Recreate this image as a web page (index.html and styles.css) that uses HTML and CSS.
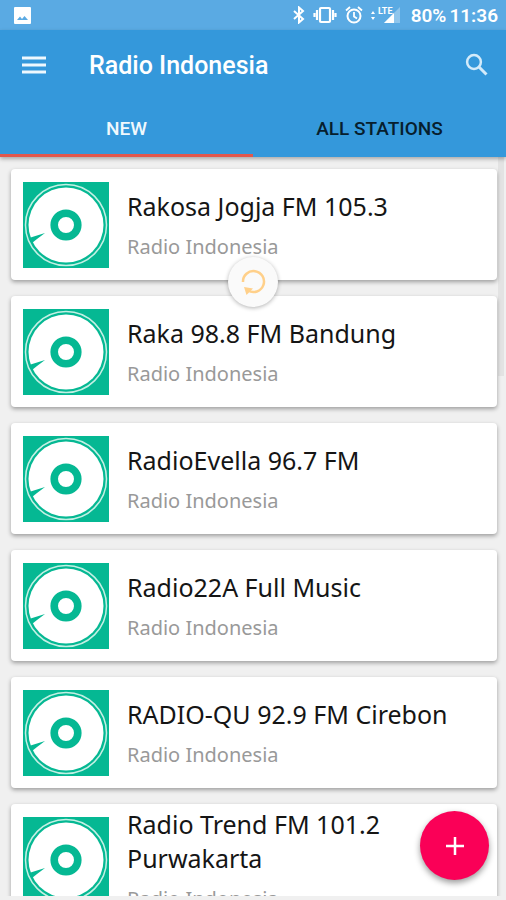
FILE: index.html
```html
<!DOCTYPE html>
<html lang="en">
<head>
    <meta charset="UTF-8">
    <meta name="viewport" content="width=device-width, initial-scale=1.0">
    <title>Radio Indonesia</title>
    <link rel="stylesheet" href="styles.css">
</head>
<body>
    <!-- Shared disc artwork for every station -->
    <svg class="sprite" aria-hidden="true">
        <symbol id="disc" viewBox="0 0 86 86">
            <rect width="86" height="86" fill="#05b893"/>
            <circle cx="43" cy="43" r="40.5" fill="none" stroke="#c4f0e4" stroke-width="1.5"/>
            <circle cx="43" cy="43" r="37.5" fill="#fff"/>
            <circle cx="43" cy="43" r="11.8" fill="#fff" stroke="#05b893" stroke-width="7.6"/>
            <path d="M22 51 L6 56 L9 61 L14 57 Z" fill="#05b893"/>
        </symbol>
    </svg>

    <div class="app">
        <div class="status-bar">
            <svg viewBox="0 0 17 17" width="17" height="17">
                <rect width="17" height="17" rx="1" fill="#fff"/>
                <path d="M3 13 L6 9.5 L8 12 L10.5 9 L14 13 Z" fill="#5aaae3"/>
            </svg>
            <div class="status-icons">
                <svg viewBox="0 0 12 18" width="12" height="18">
                    <path d="M1 5 L10 13 L6 16.5 V1.500 L10 5 L1 13" fill="none" stroke="#fff" stroke-width="2"/>
                </svg>
                <svg viewBox="0 0 24 18" width="24" height="18">
                    <rect x="7" y="2" width="10" height="14" rx="1" fill="none" stroke="#fff" stroke-width="2.2"/>
                    <path d="M4 4 V14 M20 4 V14 M1.5 7 V11 M22.5 7 V11" stroke="#fff" stroke-width="2.2"/>
                </svg>
                <svg viewBox="0 0 18 18" width="18" height="18">
                    <circle cx="9" cy="10" r="6.5" fill="none" stroke="#fff" stroke-width="2"/>
                    <path d="M9 6 V10.5 L12 12.5 M1 4.5 L5 1 M17 4.5 L13 1" fill="none" stroke="#fff" stroke-width="1.8"/>
                </svg>
                <svg viewBox="0 0 30 18" width="30" height="18">
                    <path d="M0 8 L2 5 L4 8 Z M0 11 L2 14 L4 11 Z" fill="#fff"/>
                    <path d="M29 1 V17 H13 Z" fill="#8fc5ec"/>
                    <path d="M23 7 V17 H13 Z" fill="#fff"/>
                    <text x="7" y="8" class="lte">LTE</text>
                </svg>
            </div>
            <span class="battery">80%</span>
            <span class="clock">11:36</span>
        </div>

        <header class="header">
            <div class="toolbar">
                <button type="button" class="icon-button" aria-label="Menu">
                    <svg viewBox="0 0 24 18" width="24" height="18">
                        <path d="M0 2 H24 M0 9 H24 M0 16 H24" stroke="#eef8fe" stroke-width="3"/>
                    </svg>
                </button>
                <h1>Radio Indonesia</h1>
                <button type="button" class="icon-button" aria-label="Search">
                    <svg viewBox="0 0 24 24" width="24" height="24">
                        <circle cx="9" cy="9" r="6.9" fill="none" stroke="#d3ebfa" stroke-width="2.5"/>
                        <path d="M14 14 L21.5 21.5" stroke="#d3ebfa" stroke-width="3"/>
                    </svg>
                </button>
            </div>
            <nav class="tabs">
                <a href="#new" class="tab active">NEW</a>
                <a href="#all" class="tab">ALL STATIONS</a>
            </nav>
        </header>

        <main class="stations">
            <article class="card">
                <svg class="cover"><use href="#disc"/></svg>
                <div class="info">
                    <h2>Rakosa Jogja FM 105.3</h2>
                    <p>Radio Indonesia</p>
                </div>
            </article>
            <article class="card">
                <svg class="cover"><use href="#disc"/></svg>
                <div class="info">
                    <h2>Raka 98.8 FM Bandung</h2>
                    <p>Radio Indonesia</p>
                </div>
            </article>
            <article class="card">
                <svg class="cover"><use href="#disc"/></svg>
                <div class="info">
                    <h2>RadioEvella 96.7 FM</h2>
                    <p>Radio Indonesia</p>
                </div>
            </article>
            <article class="card">
                <svg class="cover"><use href="#disc"/></svg>
                <div class="info">
                    <h2>Radio22A Full Music</h2>
                    <p>Radio Indonesia</p>
                </div>
            </article>
            <article class="card">
                <svg class="cover"><use href="#disc"/></svg>
                <div class="info">
                    <h2>RADIO-QU 92.9 FM Cirebon</h2>
                    <p>Radio Indonesia</p>
                </div>
            </article>
            <article class="card">
                <svg class="cover"><use href="#disc"/></svg>
                <div class="info">
                    <h2>Radio Trend FM 101.2 Purwakarta</h2>
                    <p>Radio Indonesia</p>
                </div>
            </article>
            <div class="scroll-thumb"></div>
        </main>

        <div class="refresh" role="status" aria-label="Refreshing">
            <svg viewBox="0 0 28 28" width="28" height="28">
                <path d="M4 14 A10.5 10.5 0 1 1 9 22.5" fill="none" stroke="#ffd08a" stroke-width="2.5"/>
                <path d="M5 19 L14 20.5 L7.5 27 Z" fill="#ffd08a"/>
            </svg>
        </div>

        <button type="button" class="fab" aria-label="Add station">
            <svg viewBox="0 0 18 18" width="18" height="18">
                <path d="M9 0 V18 M0 9 H18" stroke="#fff" stroke-width="2.5"/>
            </svg>
        </button>
    </div>
</body>
</html>
```
FILE: styles.css
```css
* {
    box-sizing: border-box;
}
body {
    margin: 0;
    background-color: #f0f0f0;
    font-family: Roboto, sans-serif;
}
.sprite {
    display: none;
}
.app {
    position: relative;
    display: flex;
    flex-direction: column;
    height: 100vh;
    padding-bottom: 4px;
    overflow: hidden;
}

/* Status bar */
.status-bar {
    display: flex;
    flex: none;
    align-items: center;
    height: 30px;
    padding: 0 8px 0 14px;
    background-color: #5aaae3;
    color: #fff;
    font-size: 19px;
    font-weight: 600;
}
.status-icons {
    display: flex;
    align-items: center;
    gap: 8px;
    margin-left: auto;
    margin-right: 10px;
}
.lte {
    fill: #fff;
    font-size: 9px;
    font-weight: 700;
}
.battery {
    margin-right: 3px;
}

/* Header */
.header {
    position: relative;
    z-index: 1;
    flex: none;
    background-color: #3498db;
    box-shadow: 0 2px 4px rgba(0, 0, 0, 0.3);
}
.toolbar {
    display: flex;
    align-items: center;
    height: 70px;
    padding: 0 17px 0 22px;
}
.icon-button {
    display: flex;
    padding: 0;
    border: none;
    background: none;
    cursor: pointer;
}
h1 {
    flex: 1;
    margin: 0 0 0 43px;
    color: #fff;
    font-size: 25px;
    font-weight: 500;
}
.tabs {
    display: flex;
}
.tab {
    flex: 1;
    height: 57px;
    border-bottom: 3px solid transparent;
    color: #071e2e;
    font-size: 19px;
    font-weight: 500;
    line-height: 58px;
    text-align: center;
    text-decoration: none;
}
.tab.active {
    border-bottom-color: #e2574c;
    color: #f0f8fd;
}

/* Station list */
.stations {
    position: relative;
    display: flex;
    flex: 1;
    flex-direction: column;
    gap: 16px;
    min-height: 0;
    padding: 12px 9px 0 11px;
    overflow: hidden;
}
.card {
    display: flex;
    flex: none;
    align-items: center;
    height: 111px;
    padding: 0 12px;
    border-radius: 4px;
    background-color: #fff;
    box-shadow: 0 2px 4px rgba(0, 0, 0, 0.35);
}
.cover {
    flex: none;
    width: 86px;
    height: 86px;
}
.info {
    flex: 1;
    margin-left: 18px;
    padding-right: 24px;
    font-family: "Noto Sans", sans-serif;
}
.card h2 {
    margin: 0;
    color: #151515;
    font-size: 25px;
    font-weight: 400;
    line-height: 34px;
}
.card p {
    margin: 10px 0 0;
    color: #999;
    font-size: 20px;
    line-height: 28px;
}
.scroll-thumb {
    position: absolute;
    top: 0;
    right: 2px;
    width: 6px;
    height: 219px;
    background-color: rgba(0, 0, 0, 0.05);
}

/* Floating controls */
.refresh {
    position: absolute;
    top: 257px;
    left: 50%;
    display: flex;
    align-items: center;
    justify-content: center;
    width: 50px;
    height: 50px;
    margin-left: -25px;
    border-radius: 50%;
    background-color: #fafafa;
    box-shadow: 0 1px 4px rgba(0, 0, 0, 0.3);
}
.fab {
    position: absolute;
    right: 17px;
    bottom: 20px;
    display: flex;
    align-items: center;
    justify-content: center;
    width: 69px;
    height: 69px;
    padding: 0;
    border: none;
    border-radius: 50%;
    background-color: #fa0057;
    box-shadow: 0 3px 6px rgba(0, 0, 0, 0.4);
    cursor: pointer;
}
```
